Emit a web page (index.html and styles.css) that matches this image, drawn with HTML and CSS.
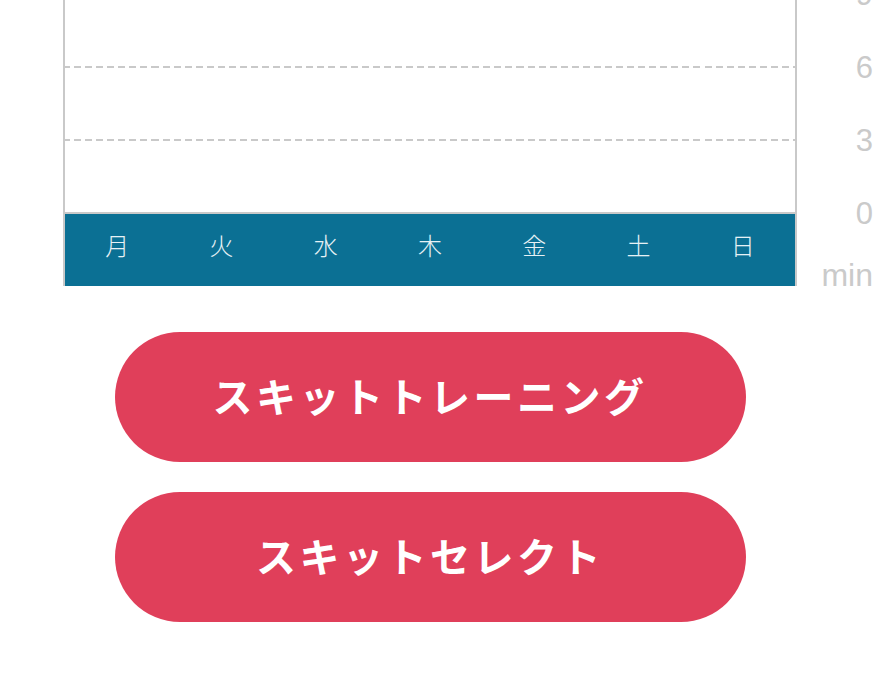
FILE: index.html
```html
<!DOCTYPE html>
<html lang="ja">
<head>
  <meta charset="UTF-8">
  <meta name="viewport" content="width=device-width, initial-scale=1.0">
  <title>スキット</title>

  <link rel="stylesheet" href="styles.css">
</head>

<body>

<div class="page">
  <div class="chart">
    <div class="chart-box">
      <div class="plot">
        <div class="grid-row"></div>
        <div class="grid-row"></div>
        <div class="grid-row"></div>
        <div class="grid-row last"></div>
      </div>
      <ul class="days">
        <li>月</li>
        <li>火</li>
        <li>水</li>
        <li>木</li>
        <li>金</li>
        <li>土</li>
        <li>日</li>
      </ul>
    </div>
    <div class="axis">
      <div class="tick">9</div>
      <div class="tick">6</div>
      <div class="tick">3</div>
      <div class="tick">0</div>
      <div class="unit">min</div>
    </div>
  </div>

  <div class="actions">
    <button class="pill-button">スキットトレーニング</button>
    <button class="pill-button">スキットセレクト</button>
  </div>
</div>

</body>
</html>
```

FILE: styles.css
```css
body {
  margin: 0;
  background-color: #fff;
  font-family: "Noto Sans CJK JP", "Noto Sans", sans-serif;
}

.page {
  width: 734px;
  margin-left: 63px;
}

.chart {
  display: flex;
  align-items: flex-start;
  margin-top: -80px;
}

.chart-box {
  width: 730px;
  border-left: 2px solid #c9c9c9;
  border-right: 2px solid #c9c9c9;
  flex-shrink: 0;
}

.plot {
  display: flex;
  flex-direction: column;
  border-bottom: 2px solid #c9c9c9;
}

.grid-row {
  height: 71px;
  border-top: 2px solid transparent;
  border-image: repeating-linear-gradient(90deg, #c9c9c9 0 7px, transparent 7px 11px) 2;
}

.days {
  display: flex;
  margin: 0;
  padding: 0;
  list-style: none;
  height: 72px;
  background-color: #0b7094;
}

.days li {
  flex: 1;
  text-align: center;
  line-height: 62px;
  font-size: 24px;
  font-weight: 300;
  color: #e6f1f5;
}

.axis {
  width: 76px;
  flex-shrink: 0;
  padding-top: 38px;
  text-align: right;
  font-family: "Liberation Sans", Arial, sans-serif;
  color: #cacaca;
}

.tick {
  height: 73px;
  line-height: 73px;
  font-size: 31px;
}

.unit {
  height: 50px;
  line-height: 50px;
  font-size: 32px;
}

.actions {
  display: flex;
  flex-direction: column;
  align-items: center;
  gap: 30px;
  margin-top: 32px;
}

.pill-button {
  width: 631px;
  height: 130px;
  padding: 0 0 5px;
  border: none;
  border-radius: 65px;
  background-color: #e03f5a;
  color: #fff;
  font-family: "Noto Sans CJK JP", sans-serif;
  font-size: 40px;
  font-weight: 700;
  letter-spacing: 3.5px;
  cursor: pointer;
}

.pill-button:hover {
  background-color: #d63752;
}
```
